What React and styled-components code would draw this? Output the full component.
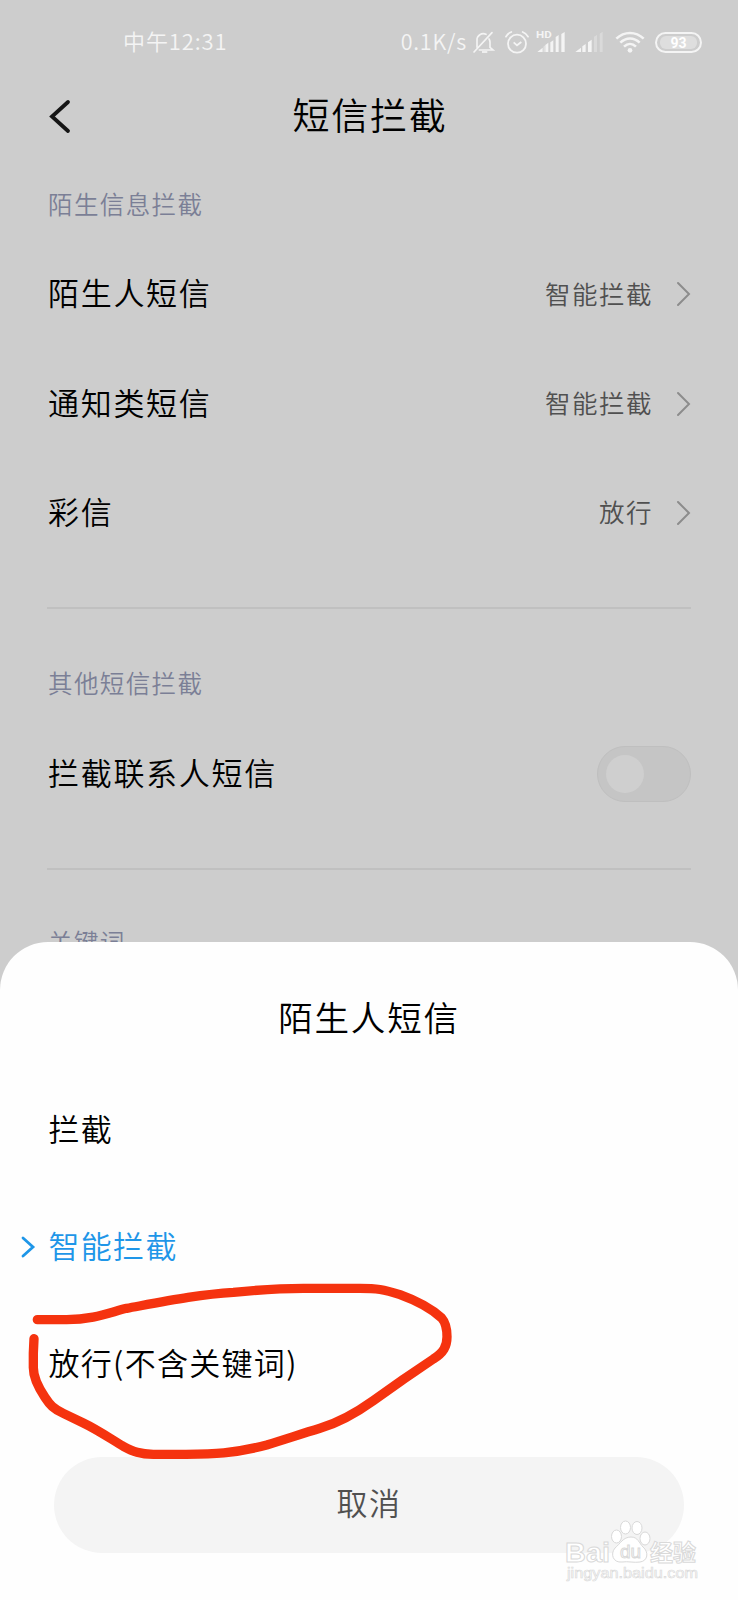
import React from "react";
import styled, { createGlobalStyle } from "styled-components";

const GlobalStyle = createGlobalStyle`
  * {
    box-sizing: border-box;
  }
  body {
    margin: 0;
    background: #cdcdcd;
    font-family: "Noto Sans CJK SC", sans-serif;
    font-weight: 350;
  }
  svg {
    display: block;
    flex: none;
    overflow: visible;
  }
`;

const BellOff = () => (
  <svg width="22" height="23" viewBox="0 0 66 69" fill="none" stroke="#f4f4f4" strokeWidth="5">
    <path d="M12 49V28a19 19 0 0 1 27-18M48 24a19 19 0 0 1 3 9v16l9 8H19M3 63L57 5" strokeLinecap="round" />
    <path d="M27 63h16" strokeWidth="5" />
  </svg>
);

const Alarm = () => (
  <svg width="24" height="23" viewBox="0 0 72 69" fill="none" stroke="#f4f4f4" strokeWidth="5.5">
    <circle cx="36" cy="38" r="27" />
    <path d="M3 17Q8 7 19 3M69 17Q64 7 53 3" strokeLinecap="round" />
    <path d="M26 34l10 9 13-10" />
  </svg>
);

const SignalHd = () => (
  <svg width="31" height="23" viewBox="0 0 93 69" fill="#f4f4f4">
    <text x="0" y="22" fontSize="29" fontWeight="700" fontFamily="Roboto" textLength="47" lengthAdjust="spacingAndGlyphs">HD</text>
    <path d="M4 63L20 50v13zM28 42l9-7v28h-9zM43 34l9-6v35h-9zM59 18l9-6v51h-9zM76 9l10-6v60H76z" />
    <path d="M22 47l5-4v20h-5z" opacity="0.5" />
  </svg>
);

const Signal = () => (
  <svg width="28" height="23" viewBox="0 0 84 69" fill="#f4f4f4">
    <path d="M1 63l17-13v13zM22 46l10-7v24H22zM39 34l11-8v37H39z" />
    <path d="M57 17l9-5v51h-9zM74 8l9-6v61h-9z" opacity="0.35" />
  </svg>
);

const Wifi = () => (
  <svg width="30" height="23" viewBox="0 0 90 69" fill="none" stroke="#f4f4f4" strokeWidth="7.5">
    <path d="M4 23C28 0 62 0 86 23M16 35C33 18 57 18 74 35M27 47C38 36 52 36 63 47" />
    <circle cx="45" cy="58" r="7" fill="#f4f4f4" stroke="none" />
  </svg>
);

const Arrow = ({ w, h, stroke, width, left }) => (
  <svg width={w} height={h} viewBox={`0 0 ${w} ${h}`} fill="none" stroke={stroke} strokeWidth={width} strokeLinecap="round">
    <path d={left ? `M${w - 2} 2L2 ${h / 2}L${w - 2} ${h - 2}` : `M2 2L${w - 2} ${h / 2}L2 ${h - 2}`} />
  </svg>
);

const Watermark = () => (
  <WatermarkSvg width="150" height="70" viewBox="0 0 150 70" fill="#fff" stroke="#d9d9d9" strokeWidth="1">
    <text x="12" y="41.500" fontSize="28" fontWeight="700" fontFamily="Liberation Sans" textLength="45" lengthAdjust="spacingAndGlyphs">Bai</text>
    <ellipse cx="63.500" cy="16.500" rx="5" ry="6.500" />
    <ellipse cx="72.500" cy="7.500" rx="5" ry="6.500" />
    <ellipse cx="84" cy="8" rx="5" ry="6.500" />
    <ellipse cx="92" cy="18.500" rx="5" ry="6.500" />
    <path d="M78 17c7 0 8 6 12 10 6 5 5 14-3 15-6 1-12-1-18 0-9 1-12-8-7-14 5-4 8-11 16-11z" />
    <text x="67" y="38" fontSize="19" fontFamily="Liberation Sans" textLength="21">du</text>
    <text x="97" y="41" fontSize="23" fontWeight="700" fontFamily="Noto Sans CJK SC" textLength="46">经验</text>
    <text x="14" y="58" fontSize="14" fontFamily="Liberation Sans" textLength="131" strokeWidth="0.6" lengthAdjust="spacingAndGlyphs">jingyan.baidu.com</text>
  </WatermarkSvg>
);

const settings = [
  { name: "陌生人短信", value: "智能拦截" },
  { name: "通知类短信", value: "智能拦截" },
  { name: "彩信", value: "放行" },
];

const options = ["拦截", "智能拦截", "放行(不含关键词)"];

const App = () => {
  const selected = 1;
  return (
    <Screen>
      <GlobalStyle />
      <StatusBar>
        <Time>中午12:31</Time>
        <StatusIcons>
          <Speed>0.1K/s</Speed>
          <IconGroup $gap={10}>
            <BellOff />
            <Alarm />
          </IconGroup>
          <IconGroup $gap={8} $left={7}>
            <SignalHd />
            <Signal />
          </IconGroup>
          <IconGroup $gap={10} $left={12}>
            <Wifi />
            <Battery>
              <span>93</span>
            </Battery>
          </IconGroup>
        </StatusIcons>
      </StatusBar>
      <Header>
        <Arrow left w={20} h={33} stroke="#151515" width={3.8} />
        <Title>短信拦截</Title>
      </Header>

      <Section $top={35.5}>
        <SectionLabel>陌生信息拦截</SectionLabel>
        {settings.map((item) => (
          <Row key={item.name}>
            <RowName>{item.name}</RowName>
            <RowValue>{item.value}</RowValue>
            <Arrow w={15} h={26} stroke="#8c8c8c" width={2} />
          </Row>
        ))}
      </Section>
      <Section $top={54}>
        <SectionLabel>其他短信拦截</SectionLabel>
        <Row>
          <RowName>拦截联系人短信</RowName>
          <Toggle>
            <Knob />
          </Toggle>
        </Row>
      </Section>
      <Section $top={52}>
        <SectionLabel>关键词</SectionLabel>
      </Section>

      <Sheet>
        <SheetTitle>陌生人短信</SheetTitle>
        {options.map((text, i) => (
          <Option key={text} $active={i === selected}>
            <Marker>
              {i === selected && <Arrow w={14} h={22} stroke="#1e96e8" width={2.8} />}
            </Marker>
            <OptionText>{text}</OptionText>
          </Option>
        ))}
        <CancelButton>取消</CancelButton>
      </Sheet>

      {/* hand drawn circle round the last option */}
      <Scribble width="480" height="290" viewBox="0 0 1440 870">
        <path d="M112 359H200C280 359 330 337 380 325C500 303 600 283 700 277C800 267 850 265 910 265H1080C1130 265 1150 268 1200 284C1250 302 1290 322 1325 354C1339 370 1341 390 1341 410C1341 440 1330 458 1300 477L1210 538L1120 602C1060 645 1010 670 960 685C900 703 860 717 800 735C700 762 630 762 550 763H460C420 763 400 755 370 739C330 715 290 688 250 669L190 640C160 626 150 615 135 592C112 558 99 530 100 500V460L102 416" />
      </Scribble>
      <Watermark />
    </Screen>
  );
};

const Screen = styled.div`
  position: relative;
  width: 738px;
  height: 1600px;
  overflow: hidden;
  background: #cdcdcd;
`;

const StatusBar = styled.div`
  display: flex;
  justify-content: space-between;
  align-items: center;
  height: 84px;
  padding: 0 36px 0 123px;
  color: #f4f4f4;
`;

const Time = styled.span`
  padding-bottom: 4px;
  font-size: 22px;
  letter-spacing: 0.9px;
`;

const StatusIcons = styled.div`
  display: flex;
  align-items: center;
`;

const IconGroup = styled.div`
  display: flex;
  align-items: center;
  gap: ${({ $gap }) => $gap}px;
  margin-left: ${({ $left }) => $left || 0}px;
`;

const Speed = styled.span`
  margin-right: 6px;
  padding-bottom: 3px;
  font-size: 21.5px;
  letter-spacing: 0.8px;
`;

const Battery = styled.div`
  width: 47px;
  height: 21px;
  padding: 2px 3px;
  border: 2px solid #f4f4f4;
  border-radius: 11px;
  span {
    display: block;
    height: 13px;
    border-radius: 6px;
    background: #dedede;
    color: #fff;
    font: 700 14px/14px Roboto, sans-serif;
    text-align: center;
  }
`;

const Header = styled.div`
  display: flex;
  align-items: center;
  height: 64px;
  padding-left: 50px;
`;

const Title = styled.h1`
  flex: 1;
  margin: 0 68px 0 0;
  padding-bottom: 3px;
  font-size: 37px;
  font-weight: 350;
  line-height: 59px;
  letter-spacing: 1.7px;
  text-align: center;
  color: #000;
`;

const Section = styled.section`
  margin: 0 47px;
  padding: ${({ $top }) => $top}px 0 39.5px;
  border-bottom: 2px solid #c0c0c0;
`;

const SectionLabel = styled.div`
  padding: 0 1px;
  font-size: 24.5px;
  line-height: 40px;
  letter-spacing: 1.4px;
  color: #7b7f96;
  margin-bottom: 16px;
`;

const Row = styled.div`
  display: flex;
  align-items: center;
  height: 109.4px;
  padding-left: 1px;
`;

const RowName = styled.span`
  flex: 1;
  padding-bottom: 5px;
  font-size: 31px;
  letter-spacing: 1.7px;
  color: #000;
`;

const RowValue = styled.span`
  margin-right: 23px;
  padding-bottom: 4px;
  font-size: 25.5px;
  letter-spacing: 1.5px;
  color: #505050;
`;

const Toggle = styled.div`
  width: 94px;
  height: 56px;
  padding: 8px;
  border: 1px solid #bfbfbf;
  border-radius: 28px;
  background: #c5c5c5;
`;

const Knob = styled.div`
  width: 38px;
  height: 38px;
  border-radius: 50%;
  background: #cfcfcf;
`;

const Sheet = styled.div`
  position: absolute;
  left: 0;
  right: 0;
  bottom: 0;
  height: 658px;
  padding-top: 43px;
  border-radius: 48px 48px 0 0;
  background: #fefefe;
`;

const SheetTitle = styled.h2`
  margin: 0 0 24px;
  font-size: 34.5px;
  font-weight: 350;
  line-height: 62px;
  letter-spacing: 1.8px;
  text-align: center;
  color: #000;
`;

const Option = styled.div`
  display: flex;
  align-items: center;
  height: 117px;
  font-size: 31px;
  letter-spacing: 1.3px;
  color: ${({ $active }) => ($active ? "#1e96e8" : "#000")};
`;

const OptionText = styled.span`
  padding-bottom: 4px;
`;

const Marker = styled.span`
  width: 48.5px;
  padding-left: 21px;
`;

const CancelButton = styled.button`
  display: block;
  width: 630px;
  height: 96px;
  margin: 35px 54px 0;
  padding: 0 0 7px;
  border: 0;
  border-radius: 48px;
  background: #f4f4f4;
  font: 350 31px "Noto Sans CJK SC", sans-serif;
  letter-spacing: 1.5px;
  color: #505050;
`;

const Scribble = styled.svg`
  position: absolute;
  top: 1200px;
  left: 0;
  fill: none;
  stroke: #f5330f;
  stroke-width: 28;
  stroke-linecap: round;
  stroke-linejoin: round;
`;

const WatermarkSvg = styled.svg`
  position: absolute;
  left: 553px;
  top: 1520px;
`;

export default App;
